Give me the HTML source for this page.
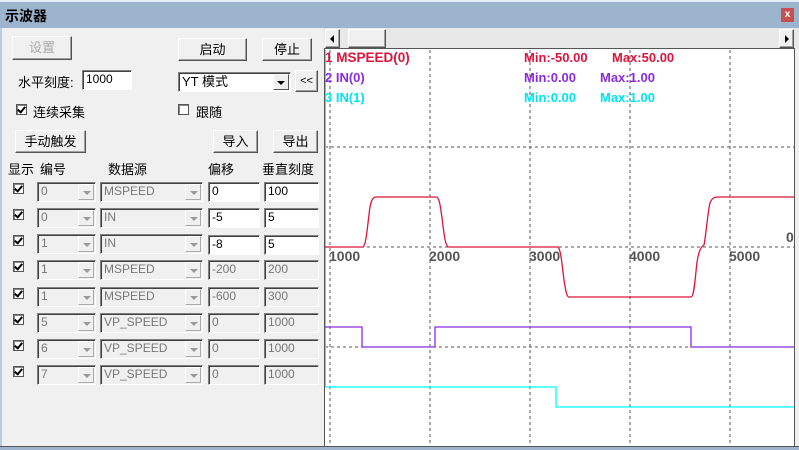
<!DOCTYPE html>
<html><head><meta charset="utf-8"><style>
*{box-sizing:border-box;margin:0;padding:0}
body{width:799px;height:450px;overflow:hidden;background:#f0f0f0;font-family:"Liberation Sans","Noto Sans CJK SC",sans-serif;font-size:12px;position:relative;color:#000}
.a{position:absolute}
.title{left:0;top:0;width:799px;height:28px;background:#9db4cf;border-top:2px solid #e8eef5}
.btn{position:absolute;background:#f0f0f0;border:1px solid;border-color:#fff #555 #555 #fff;box-shadow:inset -1px -1px 0 #a0a0a0;text-align:center;font-size:13px}
.inp{position:absolute;background:#fff;border:1px solid;border-color:#808080 #fff #fff #808080;box-shadow:inset 1px 1px 0 #404040;padding-left:3px;font-size:12px;line-height:17px}
.cb{position:absolute;width:11px;height:11px;background:#fff;border:1px solid #555;box-shadow:inset 1px 1px 0 #888}
.cb.k:after{content:"";position:absolute;left:2px;top:0px;width:3px;height:6px;border:solid #000;border-width:0 2px 2px 0;transform:rotate(40deg)}
.cmb{position:absolute;background:#f0f0f0;border:1px solid;border-color:#808080 #fff #fff #808080;box-shadow:inset 1px 1px 0 #404040;color:#777;padding-left:3px;line-height:17px;font-size:12px}
.cmb i{position:absolute;right:1px;top:1px;width:16px;height:16px;border:1px solid #fff;border-right-color:#aaa;border-bottom-color:#aaa;background:#f0f0f0}
.cmb i:after{content:"";position:absolute;left:4px;top:6px;border:4px solid transparent;border-top:4px solid #999}
</style></head><body>
<div class="a title"></div>
<div class="a" style="left:5px;top:6px;font-size:14px;font-weight:bold">示波器</div>
<div class="a" style="left:781px;top:8px;width:13px;height:14px;background:#c75050;color:#fff;font-size:10px;text-align:center;line-height:13px;font-weight:bold">x</div>
<div class="a" style="left:0;top:28px;width:2px;height:422px;background:#b8cce4"></div>
<div class="a" style="left:0;top:446px;width:799px;height:4px;background:#9db4cf;border-top:1px solid #555"></div>

<div class="btn" style="left:12px;top:36px;width:60px;height:24px;line-height:22px;color:#aaa">设置</div>
<div class="btn" style="left:178px;top:38px;width:69px;height:23px;line-height:21px">启动</div>
<div class="btn" style="left:262px;top:38px;width:50px;height:23px;line-height:21px">停止</div>
<div class="a" style="left:18px;top:72px;font-size:13px">水平刻度:</div>
<div class="inp" style="left:82px;top:70px;width:50px;height:20px">1000</div>
<div class="inp" style="left:178px;top:72px;width:113px;height:20px;font-size:13px">YT 模式<span class="a" style="right:1px;top:1px;width:16px;height:16px;background:#f0f0f0;border:1px solid;border-color:#fff #555 #555 #fff"><span class="a" style="left:3px;top:6px;border:4px solid transparent;border-top:4px solid #000"></span></span></div>
<div class="btn" style="left:295px;top:70px;width:23px;height:22px;line-height:20px;font-size:11px">&lt;&lt;</div>
<div class="cb k" style="left:16px;top:104px"></div>
<div class="a" style="left:33px;top:102px;font-size:13px">连续采集</div>
<div class="cb" style="left:178px;top:104px"></div>
<div class="a" style="left:196px;top:102px;font-size:13px">跟随</div>
<div class="btn" style="left:15px;top:130px;width:71px;height:23px;line-height:21px">手动触发</div>
<div class="btn" style="left:213px;top:130px;width:45px;height:23px;line-height:21px">导入</div>
<div class="btn" style="left:273px;top:130px;width:45px;height:23px;line-height:21px">导出</div>
<div class="a" style="left:8px;top:159px;font-size:13px">显示</div>
<div class="a" style="left:40px;top:159px;font-size:13px">编号</div>
<div class="a" style="left:108px;top:159px;font-size:13px">数据源</div>
<div class="a" style="left:208px;top:159px;font-size:13px">偏移</div>
<div class="a" style="left:262px;top:159px;font-size:13px">垂直刻度</div>

<div class="cb k" style="left:13px;top:183px"></div><div class="cmb" style="left:37px;top:182px;width:59px;height:20px">0<i></i></div><div class="cmb" style="left:100px;top:182px;width:103px;height:20px">MSPEED<i></i></div><div class="inp" style="left:208px;top:182px;width:52px;height:20px">0</div><div class="inp" style="left:264px;top:182px;width:55px;height:20px">100</div>
<div class="cb k" style="left:13px;top:209px"></div><div class="cmb" style="left:37px;top:208px;width:59px;height:20px">0<i></i></div><div class="cmb" style="left:100px;top:208px;width:103px;height:20px">IN<i></i></div><div class="inp" style="left:208px;top:208px;width:52px;height:20px">-5</div><div class="inp" style="left:264px;top:208px;width:55px;height:20px">5</div>
<div class="cb k" style="left:13px;top:235px"></div><div class="cmb" style="left:37px;top:234px;width:59px;height:20px">1<i></i></div><div class="cmb" style="left:100px;top:234px;width:103px;height:20px">IN<i></i></div><div class="inp" style="left:208px;top:235px;width:52px;height:20px">-8</div><div class="inp" style="left:264px;top:235px;width:55px;height:20px">5</div>
<div class="cb k" style="left:13px;top:261px"></div><div class="cmb" style="left:37px;top:260px;width:59px;height:20px">1<i></i></div><div class="cmb" style="left:100px;top:260px;width:103px;height:20px">MSPEED<i></i></div><div class="cmb" style="left:208px;top:260px;width:52px;height:20px">-200</div><div class="cmb" style="left:264px;top:260px;width:55px;height:20px">200</div>
<div class="cb k" style="left:13px;top:288px"></div><div class="cmb" style="left:37px;top:287px;width:59px;height:20px">1<i></i></div><div class="cmb" style="left:100px;top:287px;width:103px;height:20px">MSPEED<i></i></div><div class="cmb" style="left:208px;top:287px;width:52px;height:20px">-600</div><div class="cmb" style="left:264px;top:287px;width:55px;height:20px">300</div>
<div class="cb k" style="left:13px;top:314px"></div><div class="cmb" style="left:37px;top:313px;width:59px;height:20px">5<i></i></div><div class="cmb" style="left:100px;top:313px;width:103px;height:20px">VP_SPEED<i></i></div><div class="cmb" style="left:208px;top:313px;width:52px;height:20px">0</div><div class="cmb" style="left:264px;top:313px;width:55px;height:20px">1000</div>
<div class="cb k" style="left:13px;top:340px"></div><div class="cmb" style="left:37px;top:339px;width:59px;height:20px">6<i></i></div><div class="cmb" style="left:100px;top:339px;width:103px;height:20px">VP_SPEED<i></i></div><div class="cmb" style="left:208px;top:339px;width:52px;height:20px">0</div><div class="cmb" style="left:264px;top:339px;width:55px;height:20px">1000</div>
<div class="cb k" style="left:13px;top:366px"></div><div class="cmb" style="left:37px;top:365px;width:59px;height:20px">7<i></i></div><div class="cmb" style="left:100px;top:365px;width:103px;height:20px">VP_SPEED<i></i></div><div class="cmb" style="left:208px;top:365px;width:52px;height:20px">0</div><div class="cmb" style="left:264px;top:365px;width:55px;height:20px">1000</div>

<div class="a" style="left:324px;top:28px;width:475px;height:21px;background:#e8e8e8"></div>
<div class="btn" style="left:325px;top:29px;width:15px;height:19px"></div>
<div class="a" style="left:330px;top:35px;border:4px solid transparent;border-right:4px solid #000;border-left:0"></div>
<div class="btn" style="left:348px;top:29px;width:38px;height:19px"></div>
<div class="btn" style="left:779px;top:29px;width:15px;height:19px"></div>
<div class="a" style="left:785px;top:35px;border:4px solid transparent;border-left:4px solid #000;border-right:0"></div>

<svg class="a" style="left:0;top:0" width="799" height="450" font-family="Liberation Sans, sans-serif" font-weight="bold" font-size="13">
<rect x="324.5" y="48.5" width="470" height="398" fill="#fff" stroke="#555"/>
<g stroke="#555" stroke-dasharray="3,3" fill="none">
<path d="M330 50V446M430 50V446M530 50V446M630 50V446M730 50V446M325 147H794M325 247H794M325 347H794"/>
</g>
<line x1="325.5" y1="50" x2="325.5" y2="387" stroke="#00ffff"/>
<g fill="#555" font-size="14"><text x="329" y="261">1000</text><text x="429" y="261">2000</text><text x="529" y="261">3000</text><text x="629" y="261">4000</text><text x="729" y="261">5000</text><text x="786" y="242">0</text></g>
<path d="M325 247H363C366 245 367 230 369 215C370 203 372 197 376 197H436C439 197 440 203 442 218C444 233 445 247 449 247H558C561 250 562 265 564 280C566 293 567 297 569 297H691C694 297 695 280 697 262C699 250 701 247 704 245C706 235 708 210 710 203C712 198 714 197 718 197H794" fill="none" stroke="#dc143c" stroke-width="1.3"/>
<path d="M325 327H362V347H435V327H691V347H794" fill="none" stroke="#8a2be2" stroke-width="1.3"/>
<path d="M325 387H556V407H794" fill="none" stroke="#00ffff" stroke-width="1.3"/>
<text x="325" y="62" fill="#dc143c" font-size="13.5">1 MSPEED(0)</text><text x="524" y="62" fill="#dc143c">Min:-50.00</text><text x="612" y="62" fill="#dc143c">Max:50.00</text>
<text x="325" y="82" fill="#8a2be2">2 IN(0)</text><text x="524" y="82" fill="#8a2be2">Min:0.00</text><text x="600" y="82" fill="#8a2be2">Max:1.00</text>
<text x="325" y="102" fill="#00e5ee">3 IN(1)</text><text x="524" y="102" fill="#00e5ee">Min:0.00</text><text x="600" y="102" fill="#00e5ee">Max:1.00</text>
</svg>
</body></html>
